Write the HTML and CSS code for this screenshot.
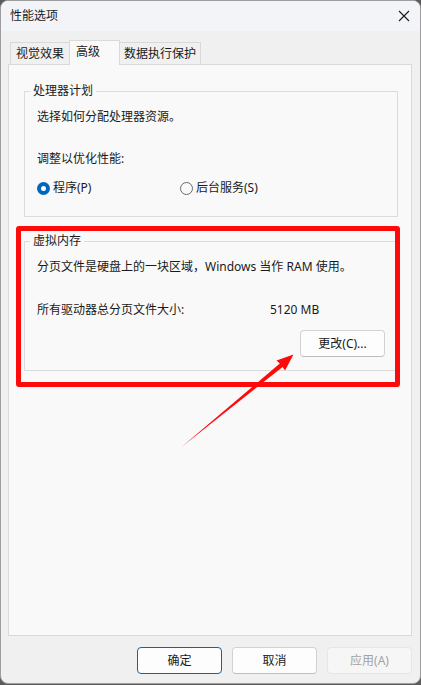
FILE: index.html
```html
<!DOCTYPE html>
<html lang="zh-CN">
<head>
<meta charset="utf-8">
<title>性能选项</title>
<link rel="stylesheet" href="styles.css">
</head>
<body>
<div class="window">
  <div class="titlebar">
    <span class="title">性能选项</span>
    <svg class="close" width="12" height="12" viewBox="0 0 12 12">
      <path d="M1 1 L11 11 M11 1 L1 11" stroke="#1a1a1a" stroke-width="1.1" fill="none"/>
    </svg>
  </div>

  <div class="content">
    <div class="tabs">
      <div class="tab tab-first">视觉效果</div>
      <div class="tab tab-active">高级</div>
      <div class="tab tab-last">数据执行保护</div>
    </div>

    <div class="panel">
      <fieldset class="group">
        <legend>处理器计划</legend>
        <p class="line first">选择如何分配处理器资源。</p>
        <p class="line second">调整以优化性能:</p>
        <div class="radios">
          <label class="radio radio-wide"><span class="dot dot-on"></span>程序(P)</label>
          <label class="radio"><span class="dot"></span>后台服务(S)</label>
        </div>
      </fieldset>

      <fieldset class="group group-mem">
        <legend>虚拟内存</legend>
        <p class="line first">分页文件是硬盘上的一块区域，Windows 当作 RAM 使用。</p>
        <div class="size-row">
          <span class="size-label">所有驱动器总分页文件大小:</span>
          <span>5120 MB</span>
        </div>
        <div class="change-row">
          <button class="btn">更改(C)...</button>
        </div>
      </fieldset>
    </div>

    <div class="footer">
      <button class="btn btn-default">确定</button>
      <button class="btn">取消</button>
      <button class="btn btn-disabled">应用(A)</button>
    </div>
  </div>

  <!-- annotation: red frame around the virtual memory group and a pointer to the change button -->
  <div class="highlight"></div>
  <svg class="pointer" width="421" height="685" viewBox="0 0 421 685">
    <polygon fill="#ff0a0a" points="293.5,354.5 276.5,360.5 279.8,363.6 181.5,447 282.6,366.9 285,370.5"/>
  </svg>
</div>
</body>
</html>
```

FILE: styles.css
```css
html, body {
  margin: 0;
  padding: 0;
}

body {
  width: 421px;
  height: 685px;
  background: #5c5c5c;
  overflow: hidden;
  font-family: "Segoe UI", "Noto Sans", "Noto Sans CJK SC", sans-serif;
  font-size: 12px;
  line-height: 16px;
  color: #1a1a1a;
}

.window {
  position: relative;
  width: 421px;
  height: 684px;
  box-sizing: border-box;
  border: 1px solid #9d9d9d;
  border-radius: 8px;
  background: #f0f0f0;
  overflow: hidden;
}

.titlebar {
  height: 30px;
  background: #f3f4f8;
  display: flex;
  align-items: center;
  justify-content: space-between;
  padding: 0 9px 0 9px;
}

.title {
  color: #1a1a1a;
}

.close {
  display: block;
  margin-right: 1px;
}

.content {
  padding: 9px 8px 0 7px;
}

/* tab strip */
.tabs {
  display: flex;
  align-items: flex-end;
  margin-left: 2px;
  height: 24px;
}

.tab {
  box-sizing: border-box;
  height: 22px;
  border-top: 1px solid #d9d9d9;
  background: #f0f0f0;
  display: flex;
  align-items: center;
  padding-top: 1px;
}

.tab-first {
  width: 59px;
  border-left: 1px solid #d9d9d9;
  padding-left: 5px;
}

.tab-active {
  position: relative;
  z-index: 1;
  width: 51px;
  height: 25px;
  margin-bottom: -1px;
  border-left: 1px solid #d9d9d9;
  border-right: 1px solid #d9d9d9;
  background: #f9f9f9;
  padding-left: 6px;
  padding-bottom: 4px;
}

.tab-last {
  width: 81px;
  border-right: 1px solid #d9d9d9;
  padding-left: 4px;
}

/* tab page */
.panel {
  box-sizing: border-box;
  height: 572px;
  border: 1px solid #d9d9d9;
  background: #f9f9f9;
  padding: 18px 13px 0 15px;
}

.group {
  margin: 0;
  padding: 0 12px 20px 12px;
  border: 1px solid #dcdcdc;
  min-width: 0;
}

.group legend {
  padding: 0 3px;
  margin-left: -7px;
  line-height: 16px;
}

.group-mem {
  margin-top: 16px;
  padding-bottom: 13px;
}

.line {
  margin: 0;
}

.line.first {
  margin-top: 10px;
}

.line.second {
  margin-top: 26px;
}

.radios {
  display: flex;
  margin-top: 13px;
}

.radio {
  display: flex;
  align-items: center;
  gap: 3px;
}

.radio-wide {
  width: 143px;
}

.dot {
  box-sizing: border-box;
  width: 13px;
  height: 13px;
  border-radius: 50%;
  border: 1px solid #6a6a6a;
  background: #f9f9f9;
  display: inline-flex;
  align-items: center;
  justify-content: center;
}

.dot-on {
  border: none;
  background: #0067c0;
}

.dot-on::after {
  content: "";
  width: 5px;
  height: 5px;
  border-radius: 50%;
  background: #ffffff;
}

.size-row {
  display: flex;
  margin-top: 27px;
}

.size-label {
  width: 233px;
}

.change-row {
  display: flex;
  justify-content: flex-end;
  margin-top: 12px;
}

/* push buttons */
.btn {
  box-sizing: border-box;
  width: 85px;
  height: 27px;
  font: inherit;
  color: #1a1a1a;
  background: #fdfdfd;
  border: 1px solid #d2d2d2;
  border-bottom-color: #bdbdbd;
  border-radius: 4px;
  padding: 0;
}

.footer {
  display: flex;
  justify-content: flex-end;
  gap: 10px;
  margin-top: 11px;
}

.btn-default {
  border: 1.5px solid #0067c0;
}

.btn-disabled {
  background: #f6f6f6;
  border: 1px solid #e6e6e6;
  color: #a3a3a3;
}

/* annotation overlay */
.highlight {
  position: absolute;
  left: 15px;
  top: 225px;
  width: 384px;
  height: 161px;
  box-sizing: border-box;
  border: 5px solid #ff0a0a;
  border-radius: 3px;
}

.pointer {
  position: absolute;
  left: -1px;
  top: -1px;
}
```
